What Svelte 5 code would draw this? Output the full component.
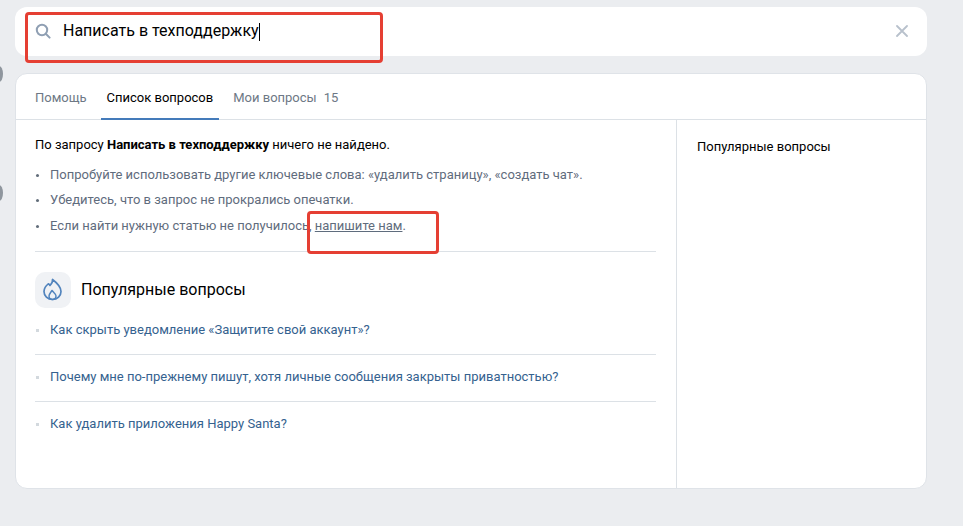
<script>
  const hints = [
    'Попробуйте использовать другие ключевые слова: «удалить страницу», «создать чат».',
    'Убедитесь, что в запрос не прокрались опечатки.'
  ];
  const questions = [
    'Как скрыть уведомление «Защитите свой аккаунт»?',
    'Почему мне по-прежнему пишут, хотя личные сообщения закрыты приватностью?',
    'Как удалить приложения Happy Santa?'
  ];
</script>

<div class="page">
  <span class="dot dot1"></span>
  <span class="dot dot2"></span>

  <div class="search">
    <svg class="glass" width="16" height="16" viewBox="0 0 16 16" fill="none">
      <circle cx="7" cy="7" r="5.2" stroke="#8f9fb3" stroke-width="2"/>
      <path d="M11 11l3.600 3.600" stroke="#8f9fb3" stroke-width="2" stroke-linecap="round"/>
    </svg>
    <span class="query">Написать в техподдержку</span><span class="caret"></span>
    <svg class="close" width="12" height="12" viewBox="0 0 12 12" fill="none">
      <path d="M1 1l10 10M11 1L1 11" stroke="#b8c1cc" stroke-width="1.800" stroke-linecap="round"/>
    </svg>
  </div>

  <div class="card">
    <nav class="tabs">
      <span class="tab">Помощь</span>
      <span class="tab active">Список вопросов</span>
      <span class="tab">Мои вопросы<span class="count">15</span></span>
    </nav>
    <div class="body">
      <main class="content">
        <p class="lead">По запросу <b>Написать в техподдержку</b> ничего не найдено.</p>
        <ul class="hints">
          {#each hints as h}
            <li>{h}</li>
          {/each}
          <li>Если найти нужную статью не получилось, <a href="#top">напишите нам</a>.</li>
        </ul>
        <div class="heading">
          <div class="fire">
            <svg width="22" height="24" viewBox="0 0 22 24" fill="none">
              <path d="M10.500 1.500c.5 3-1 4.500-2.500 6-.5-.8-1-1.300-1.700-1.700C3.500 8 2 10.500 2 13.500c0 4.500 3.600 8 8.500 8s8.500-3.500 8.500-8c0-5-4.500-9-8.500-12z" stroke="#5284bd" stroke-width="1.700" stroke-linejoin="round"/>
              <path d="M10.500 21.500c-2 0-3.500-1.600-3.500-3.500 0-2 1.500-3.200 3-5.500 1.800 2 4 3.500 4 5.500 0 1.900-1.500 3.500-3.500 3.500z" stroke="#5284bd" stroke-width="1.500" stroke-linejoin="round"/>
            </svg>
          </div>
          <h2>Популярные вопросы</h2>
        </div>
        <ul class="questions">
          {#each questions as q}
            <li>{q}</li>
          {/each}
        </ul>
      </main>
      <aside class="side">Популярные вопросы</aside>
    </div>
  </div>

  <div class="mark mark1"></div>
  <div class="mark mark2"></div>
</div>

<style>
  :global(body) {
    margin: 0;
    background: #ebedf0;
  }
  .page {
    position: relative;
    width: 963px;
    height: 526px;
    overflow: hidden;
    padding: 7px 36px 0 15px;
    box-sizing: border-box;
    font-family: Roboto, "Liberation Sans", sans-serif;
    font-size: 13px;
    color: #000;
  }
  .dot {
    position: absolute;
    left: -5px;
    width: 8px;
    height: 16px;
    background: #8f969e;
    border-radius: 50%;
  }
  .dot1 { top: 66px; }
  .dot2 { top: 185px; }
  .search {
    display: flex;
    align-items: center;
    height: 49px;
    padding: 0 19px 2px 20px;
    box-sizing: border-box;
    background: #fff;
    border-radius: 12px;
  }
  .glass { flex: none; margin-right: 12px; }
  .query { font-size: 16px; line-height: 20px; }
  .caret { width: 1px; height: 18px; background: #000; margin-top: 2px; }
  .close { margin-left: auto; }
  .card {
    margin-top: 17px;
    height: 416px;
    box-sizing: border-box;
    background: #fff;
    border: 1px solid #dfe3e8;
    border-radius: 12px;
    display: flex;
    flex-direction: column;
    overflow: hidden;
  }
  .tabs {
    display: flex;
    height: 46px;
    flex: none;
    box-sizing: border-box;
    padding-left: 13px;
    border-bottom: 1px solid #dce1e6;
    gap: 8px;
    color: #6d7885;
  }
  .tab {
    display: flex;
    align-items: center;
    padding: 0 6px;
    height: 46px;
    box-sizing: border-box;
  }
  .tab.active {
    color: #000;
    border-bottom: 2px solid #447bba;
    padding-top: 2px;
  }
  .count { margin-left: 7px; }
  .body { display: flex; flex: 1; min-height: 0; }
  .content {
    width: 661px;
    box-sizing: border-box;
    padding: 0 20px 0 19px;
    border-right: 1px solid #dce1e6;
  }
  .lead {
    margin: 17px 0 0;
    line-height: 16px;
  }
  .lead b { font-weight: 700; }
  .hints {
    list-style: none;
    margin: 14px 0 0;
    padding: 0 0 17px;
    border-bottom: 1px solid #dce1e6;
    color: #5f6c7d;
  }
  .hints li {
    position: relative;
    padding-left: 15px;
    height: 25px;
    line-height: 16px;
  }
  .hints li:nth-child(2) { height: 26px; }
  .hints li:last-child { height: 16px; }
  .hints li::before {
    content: '';
    position: absolute;
    left: 1px;
    top: 7px;
    width: 3px;
    height: 3px;
    border-radius: 50%;
    background: #626d7a;
  }
  .hints a { color: inherit; text-decoration: underline; }
  .heading {
    display: flex;
    align-items: center;
    margin-top: 20px;
    gap: 10px;
  }
  .fire {
    width: 36px;
    height: 36px;
    border-radius: 10px;
    background: #f0f2f5;
    display: flex;
    align-items: center;
    justify-content: center;
  }
  h2 {
    margin: 0;
    font-size: 16px;
    font-weight: 400;
    line-height: 20px;
  }
  .questions {
    list-style: none;
    margin: 0;
    padding: 0;
    color: #35628f;
  }
  .questions li {
    position: relative;
    padding: 13px 0 16px 15px;
    line-height: 17px;
    border-bottom: 1px solid #dce1e6;
  }
  .questions li:last-child { border-bottom: 0; }
  .questions li::before {
    content: '';
    position: absolute;
    left: 1px;
    top: 21px;
    width: 3px;
    height: 3px;
    background: #d3d9de;
  }
  .side {
    padding: 19px 20px;
    line-height: 16px;
  }
  .mark {
    position: absolute;
    box-sizing: border-box;
    border: 3px solid #e53f33;
    border-radius: 4px;
  }
  .mark1 { left: 25px; top: 12px; width: 358px; height: 51px; }
  .mark2 { left: 307px; top: 211px; width: 132px; height: 43px; }
</style>
